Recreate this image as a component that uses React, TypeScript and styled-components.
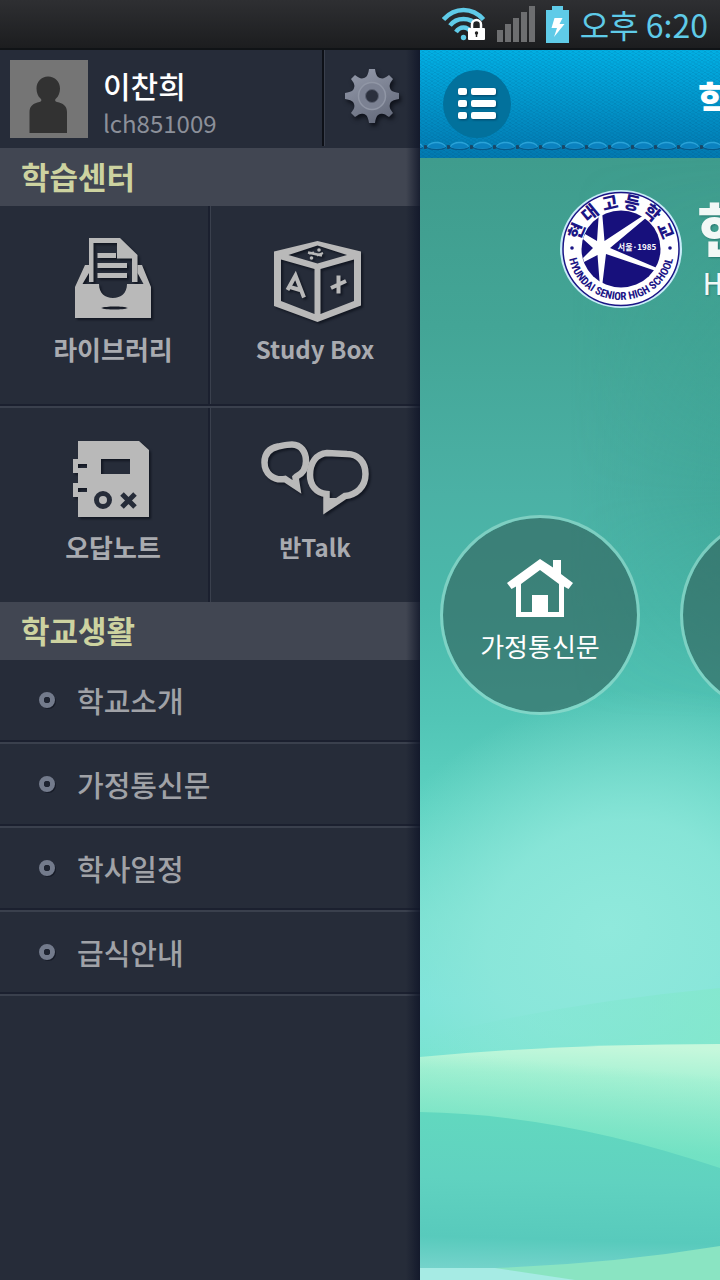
import React from 'react';
import styled, { createGlobalStyle } from 'styled-components';

const GlobalStyle = createGlobalStyle`
  * { box-sizing: border-box; }
  body {
    margin: 0;
    background: #262c39;
    font-family: "Noto Sans CJK KR", "Noto Sans", sans-serif;
  }
  button { border: 0; padding: 0; background: none; font: inherit; color: inherit; cursor: pointer; }
  a { color: inherit; text-decoration: none; }
  h1, h2, p, ul { margin: 0; padding: 0; font-weight: inherit; }
  svg { display: block; flex: none; }
`;

const Screen = styled.div`
  display: flex;
  flex-direction: column;
  min-height: 100vh;
  overflow: hidden;
`;

const StatusBar = styled.header`
  display: flex;
  align-items: center;
  justify-content: flex-end;
  gap: 11px;
  height: 50px;
  padding-right: 12px;
  border-bottom: 2px solid #101316;
  background: linear-gradient(#2e2f32, #1c1d1f);
`;

const Clock = styled.time`
  color: #5fcbe8;
  font-size: 32px;
  line-height: 48px;
  white-space: nowrap;
`;

const Body = styled.div`
  flex: 1;
  display: grid;
  grid-template-columns: minmax(0, 7fr) minmax(0, 5fr);
`;

const Drawer = styled.aside`
  position: relative;
  background: #262c39;
  &::after {
    content: "";
    position: absolute;
    inset: 0 0 0 auto;
    width: 14px;
    background: linear-gradient(90deg, rgba(15, 21, 40, 0), rgba(15, 21, 40, 0.8));
    pointer-events: none;
  }
`;

const Profile = styled.div`
  display: flex;
  height: 98px;
`;

const ProfileInfo = styled.div`
  flex: 1;
  display: flex;
  align-items: center;
  gap: 15px;
  padding-left: 10px;
`;

const UserText = styled.div`
  display: grid;
  gap: 2px;
  padding-top: 8px;
`;

const UserName = styled.p`
  color: #fff;
  font-size: 30px;
  font-weight: 500;
  line-height: 38px;
`;

const UserId = styled.p`
  color: #8c909a;
  font-size: 24px;
  line-height: 34px;
`;

const SettingsButton = styled.button`
  display: flex;
  align-items: center;
  justify-content: center;
  width: 98px;
  height: 96px;
  padding-bottom: 4px;
  border-left: 2px solid #0d1017;
  box-shadow: inset 1px 0 #3a404d;
  svg { filter: drop-shadow(2px 3px 2px rgba(8, 10, 18, 0.8)); }
`;

const SectionTitle = styled.h2`
  height: 58px;
  padding-left: 21px;
  background: #414652;
  color: #cdd3a0;
  font-size: 31px;
  font-weight: 700;
  line-height: 56px;
`;

const TileGrid = styled.div`
  display: grid;
  grid-template-columns: 1fr 1fr;
`;

const Tile = styled.a<{ $left?: boolean; $top?: boolean }>`
  display: flex;
  flex-direction: column;
  align-items: center;
  height: ${p => (p.$top ? 202 : 194)}px;
  padding-top: ${p => (p.$top ? 31 : 27)}px;
  padding-left: ${p => (p.$left ? 16 : 0)}px;
  border-bottom: ${p => (p.$top ? '2px solid #3a404d' : '0')};
  box-shadow: ${p =>
    [
      p.$top && 'inset 0 -2px #1b202f',
      p.$left ? 'inset -2px 0 #1b202f' : 'inset 1px 0 #3a404d',
    ].filter(Boolean).join(', ')};
`;

const TileIcon = styled.span`
  display: flex;
  align-items: center;
  height: 88px;
  svg { filter: drop-shadow(2px 2px 1px rgba(10, 14, 24, 0.7)); }
`;

const TileLabel = styled.span<{ $latin?: boolean }>`
  margin-top: 6px;
  color: #a9abb0;
  font-size: ${p => (p.$latin ? 24 : 26)}px;
  font-weight: 700;
  line-height: 36px;
`;

const Menu = styled.ul`
  list-style: none;
`;

const MenuLink = styled.a`
  display: flex;
  align-items: center;
  gap: 20px;
  height: 84px;
  padding: 0 0 2px 37px;
  border-bottom: 2px solid #3a404d;
  box-shadow: inset 0 -2px #1b202f;
  color: #a0a2a7;
  font-size: 29px;
  font-weight: 500;
  line-height: 40px;
`;

const Page = styled.main`
  position: relative;
  display: flex;
  flex-direction: column;
  overflow: hidden;
  background: #4fbcab;
`;

const Backdrop = styled.svg`
  position: absolute;
  inset: 108px 0 0 0;
  width: 100%;
  height: calc(100% - 108px);
`;

const TitleBar = styled.header`
  position: relative;
  display: flex;
  justify-content: space-between;
  height: 108px;
  padding: 20px 0 0 23px;
  background:
    repeating-linear-gradient(30deg, rgba(0, 50, 90, 0.08) 0 1px, transparent 1px 3px),
    repeating-linear-gradient(-30deg, rgba(0, 50, 90, 0.06) 0 1px, transparent 1px 3px),
    linear-gradient(#02b0e4, #0279b0);
`;

const Stitches = styled.svg`
  position: absolute;
  left: 0;
  bottom: 6px;
  width: 100%;
  height: 12px;
`;

const MenuButton = styled.button`
  display: flex;
  align-items: center;
  justify-content: center;
  width: 68px;
  height: 68px;
  border-radius: 50%;
  background: #02719c;
  svg { filter: drop-shadow(1px 1px 1px rgba(0, 40, 70, 0.6)); }
`;

const PageTitle = styled.h1`
  width: 22px;
  color: #fff;
  font-size: 38px;
  font-weight: 900;
  line-height: 56px;
  white-space: nowrap;
`;

const School = styled.div`
  position: relative;
  display: flex;
  justify-content: flex-end;
  gap: 14px;
  padding-top: 31px;
`;

const SchoolName = styled.div`
  width: 23px;
  color: #f2f8f6;
  white-space: nowrap;
  text-shadow: 1px 1px 2px rgba(0, 60, 60, 0.4);
`;

const SchoolKorean = styled.p`
  font-size: 58px;
  font-weight: 900;
  line-height: 76px;
`;

const SchoolEnglish = styled.p`
  padding-left: 6px;
  font-family: "Liberation Sans Narrow", "Roboto Condensed", "Liberation Sans", sans-serif;
  font-size: 32px;
  line-height: 38px;
`;

const Shortcuts = styled.nav`
  position: relative;
  display: flex;
  gap: 40px;
  padding: 206px 0 0 20px;
`;

const Shortcut = styled.a`
  flex: none;
  display: flex;
  flex-direction: column;
  align-items: center;
  width: 200px;
  height: 200px;
  padding-top: 41px;
  border: 3px solid rgba(160, 225, 212, 0.6);
  border-radius: 50%;
  background: rgba(48, 94, 88, 0.6);
  background-clip: padding-box;
  color: #fff;
  font-size: 26px;
  line-height: 36px;
  span { margin-top: 11px; }
`;

const WifiIcon = () => (
  <svg width="44" height="34" viewBox="0 0 44 34" fill="none" aria-hidden="true">
    <g stroke="#5fcbe8" strokeWidth="4.5">
      <path d="M1.5 12.5Q10 3 21.500 3T41.500 12.500" />
      <path d="M8 18.500Q13 12 21.500 12T35 18.500" />
      <path d="M14 25Q17 20.500 21.500 20.500T29 25" />
    </g>
    <circle cx="21.500" cy="30.500" r="2.700" fill="#5fcbe8" />
    <path d="M30 21v-3.500a4.500 4.500 0 0 1 9 0V21" fill="#222426" stroke="#fff" strokeWidth="2.500" />
    <rect x="26" y="21" width="17" height="12" rx="1" fill="#fff" />
    <circle cx="34.500" cy="26" r="1.700" fill="#222" />
    <path d="M34.500 26v4" stroke="#222" strokeWidth="1.500" />
  </svg>
);

const SignalIcon = () => (
  <svg width="38" height="36" viewBox="0 0 38 36" fill="#6d6e70" aria-hidden="true">
    <path d="M0 24h6v12H0zM8 18h6v18H8zM16 12h6v24h-6zM24 6h6v30h-6zM32 0h6v36h-6z" />
  </svg>
);

const BatteryIcon = () => (
  <svg width="23" height="37" viewBox="0 0 23 37" aria-hidden="true">
    <path d="M6 0h11v4h6v33H0V4h6z" fill="#5fcbe8" />
    <path d="M8.500 12h8l-3 6h5L8 31l3-9H5.500z" fill="#fff" />
  </svg>
);

const Avatar = () => (
  <svg width="78" height="78" viewBox="0 0 78 78" role="img" aria-label="프로필 사진">
    <path fill="#757575" d="M0 0h78v78H0z" />
    <path
      fill="#323232"
      d="M38 16.500c7 0 12 5 12 12 0 4-1.500 8-4 10-1.500 1.500-1 3 1 3.500 6 1 10 4 10 10v21H19.500V52c0-6 4-9 10-10 2-.5 2.500-2 1-3.500-2.500-2-4-6-4-10 0-7 5-12 11.500-12z"
    />
  </svg>
);

const GearIcon = () => (
  <svg width="60" height="60" viewBox="-30 -30 60 60" aria-hidden="true">
    <defs>
      <linearGradient id="gear" gradientUnits="userSpaceOnUse" x1="-15" y1="-27" x2="12" y2="27">
        <stop offset="0" stopColor="#9298a8" />
        <stop offset="1" stopColor="#646a7b" />
      </linearGradient>
    </defs>
    <path
      fill="url(#gear)"
      d="M-3-27H3C4-20 6-18.500 8-18 11-17 13-18 17-21L21-17C18-13 17-11 18-8 18.500-6 20-4 27-3V3C20 4 18.500 6 18 8 17 11 18 13 21 17L17 21C13 18 11 17 8 18 6 18.500 4 20 3 27H-3C-4 20-6 18.500-8 18-11 17-13 18-17 21L-21 17C-18 13-17 11-18 8-18.500 6-20 4-27 3V-3C-20-4-18.500-6-18-8-17-11-18-13-21-17L-17-21C-13-18-11-17-8-18-6-18.500-4-20-3-27z"
    />
    <circle r="13.500" fill="#7b8192" stroke="#9096a5" strokeWidth="1.500" />
    <circle r="6.500" fill="#2b303d" stroke="#5d6373" strokeWidth="1" />
  </svg>
);

const LibraryIcon = () => (
  <svg width="76" height="86" viewBox="0 0 76 86" fill="#b9b9b9" aria-hidden="true">
    <path fillRule="evenodd" d="M14 0h31l17.500 17v27H57V20.500H42V5H18.500v39H14z" />
    <path d="M22.500 15H41v5H22.500zM22.500 25H52v5H22.500zM22.500 35H52v5H22.500z" />
    <path
      fillRule="evenodd"
      d="M10 27h4v8L7.500 46H24c0 9 6 14 14 14s14-5 14-14h16.500L62.500 35v-8H67l9 22v31H0V49zM26 70c5 2 22 2 27 0-5-2-22-2-27 0z"
    />
  </svg>
);

const BoxIcon = () => (
  <svg width="92" height="80" viewBox="-5 0 92 80" overflow="visible" fill="none" stroke="#b9b9b9" aria-hidden="true">
    <path
      fill="#b9b9b9"
      stroke="none"
      fillRule="evenodd"
      d="M0 10.500 43.500 0 87 10.500v54L43.500 81 0 65zM14.500 14 43.500 22.500 73 14 43.500 4.500zM7 18.500V60l33.500 13V28zM46.500 28v45L80 60V18.500z"
    />
    <path strokeWidth="4" d="M13.500 49 21.500 34.500 30 56.500M16 46l10 3" />
    <path strokeWidth="4" d="M64.500 34.500v18M57 47l15-7" />
    <path strokeWidth="2.500" d="M34 11.500l14 3" />
    <path strokeWidth="2" d="M35 12.500l5-1M43 14.500l6-2.500" />
    <g fill="#b9b9b9" stroke="none">
      <circle cx="45" cy="9" r="1.800" />
      <circle cx="37.500" cy="17" r="1.800" />
    </g>
  </svg>
);

const NoteIcon = () => (
  <svg width="80" height="78" viewBox="0 0 80 78" aria-hidden="true">
    <path
      fill="#b9b9b9"
      fillRule="evenodd"
      d="M5 1h61l10 9v67H5V57H0V43h5V33H0V19h5zM5 24v4h9v-4zM5 48v4h9v-4zM28 19v15h29V19z"
    />
    <g fill="none" stroke="#262c39" strokeWidth="5">
      <circle cx="30" cy="60" r="6.500" />
      <path d="m49 54 13 13m0-13L49 67" />
    </g>
  </svg>
);

const TalkIcon = () => (
  <svg width="108" height="76" viewBox="0 0 108 76" fill="none" stroke="#b9b9b9" strokeWidth="6.500" aria-hidden="true">
    <path d="M17 5.500C22 4.500 26 3.500 31 3.500 40 3.500 45 11 45 20c0 8-4 13-9.500 15.500l-1 1L36 46 24 38C12 40 3.500 32 3.500 21.500 3.500 13 8 7.500 17 5.500z" />
    <path d="M66 12l20 1c11 0 18.500 8 18.500 20 0 13-9.500 21-20.500 22L65.500 67.500V53C55 52 49 44 49 34c0-12 6-21 17-22z" />
    <path d="M30 40l7 8 1-11zM66 70l14-13H66z" fill="#b9b9b9" stroke="none" />
  </svg>
);

const Bullet = () => (
  <svg width="20" height="20" viewBox="0 0 20 20" fill="none" aria-hidden="true">
    <circle cx="11.500" cy="11.500" r="7.500" fill="#171c28" />
    <circle cx="10" cy="10" r="5.500" stroke="#737b8c" strokeWidth="5" />
    <circle cx="10" cy="10" r="3" fill="#1e2431" />
  </svg>
);

const ListIcon = () => (
  <svg width="38" height="32" viewBox="0 0 38 32" fill="#fff" aria-hidden="true">
    {[0, 12, 24].map(y => (
      <g key={y}>
        <rect y={y} width="9" height="7" rx="2" />
        <rect x="13" y={y} width="25" height="7" rx="2" />
      </g>
    ))}
  </svg>
);

const HouseIcon = () => (
  <svg width="66" height="58" viewBox="0 0 66 58" aria-hidden="true">
    <path
      fill="#fff"
      fillRule="evenodd"
      d="M33 0 46 8.500V1h8v14l12 9-4.500 6-4.500-2.500V58H9V27.500L4.500 30 0 24zM33 11 14 25v28h11V36h16v17h11V25z"
    />
  </svg>
);

const SchoolCrest = () => (
  <svg width="124" height="120" viewBox="-62 -60 124 120" role="img" aria-label="현대고등학교">
    <defs>
      <path id="crest-top" d="M-42 0A42 41 0 0 1 42 0" />
      <path id="crest-bottom" d="M-53 0A53 51 0 0 0 53 0" />
    </defs>
    <ellipse rx="61" ry="59" fill="#c8ecf8" />
    <ellipse rx="58" ry="56.500" fill="#fff" stroke="#1b1585" strokeWidth="1.500" />
    <ellipse rx="39.500" ry="38.500" fill="#17107c" />
    <path
      fill="#fff"
      d="M-22-38-19-38-16.500-8 23-34 26-32-11-1 36 19 35 22-15 5-19 38-21 38-23.500 6-37 13-38 9-28-1-38-10-36-15-24-8z"
    />
    <text fill="#1b1585" fontSize="17" fontWeight="900" textAnchor="middle">
      <textPath href="#crest-top" startOffset="50%">현 대 고 등 학 교</textPath>
    </text>
    <text fill="#1b1585" fontSize="11" fontWeight="700" fontFamily="Liberation Sans Narrow, Roboto Condensed, Liberation Sans, sans-serif" textAnchor="middle">
      <textPath href="#crest-bottom" startOffset="50%">HYUNDAI SENIOR HIGH SCHOOL</textPath>
    </text>
    <text x="16" y="1" fill="#fff" fontSize="8" fontWeight="700" textAnchor="middle">서울·1985</text>
    <circle cx="-49" cy="-1" r="1.800" fill="#1b1585" />
    <circle cx="49" cy="-1" r="1.800" fill="#1b1585" />
  </svg>
);

const WaveBackdrop = () => (
  <Backdrop viewBox="0 0 300 1122" preserveAspectRatio="none" aria-hidden="true">
    <defs>
      <linearGradient id="sky" x1="0" y1="0" x2="0" y2="1">
        <stop offset="0" stopColor="#3f9c8d" />
        <stop offset="0.150" stopColor="#43a596" />
        <stop offset="0.300" stopColor="#4bb1a5" />
        <stop offset="0.400" stopColor="#4bb9ab" />
        <stop offset="0.500" stopColor="#52c5b6" />
        <stop offset="0.580" stopColor="#5dd2c1" />
        <stop offset="0.680" stopColor="#74dfd0" />
        <stop offset="0.750" stopColor="#78e3dc" />
        <stop offset="0.800" stopColor="#72e3cf" />
      </linearGradient>
      <radialGradient id="glow" gradientUnits="userSpaceOnUse" cx="0" cy="0" r="1" gradientTransform="translate(190 770) rotate(-25) scale(280 230)">
        <stop offset="0" stopColor="#90e9dc" />
        <stop offset="0.450" stopColor="#8de7da" stopOpacity="0.850" />
        <stop offset="1" stopColor="#8de4d6" stopOpacity="0" />
      </radialGradient>
      <linearGradient id="shade" x1="0" y1="0" x2="1" y2="0">
        <stop offset="0.500" stopColor="#2f9684" stopOpacity="0" />
        <stop offset="1" stopColor="#2f9684" stopOpacity="0.300" />
      </linearGradient>
      <linearGradient id="shade-fade" x1="0" y1="0" x2="0" y2="1">
        <stop offset="0" stopColor="#fff" stopOpacity="0" />
        <stop offset="0.600" stopColor="#fff" />
        <stop offset="1" stopColor="#fff" stopOpacity="0" />
      </linearGradient>
      <mask id="shade-mask">
        <path fill="url(#shade-fade)" d="M0 0h300v560H0z" />
      </mask>
      <linearGradient id="hill" x1="0.600" y1="0" x2="0.500" y2="1">
        <stop offset="0" stopColor="#c6f8dc" />
        <stop offset="0.250" stopColor="#a8f2d4" />
        <stop offset="0.700" stopColor="#97ebd0" />
        <stop offset="1" stopColor="#84e2d2" />
      </linearGradient>
      <linearGradient id="hill-edge" x1="0.100" y1="1" x2="0.300" y2="0">
        <stop offset="0.300" stopColor="#66dfbe" stopOpacity="0.700" />
        <stop offset="0.900" stopColor="#66dfbe" stopOpacity="0" />
      </linearGradient>
      <linearGradient id="sea" x1="0.300" y1="0" x2="0.250" y2="1">
        <stop offset="0" stopColor="#62d8bf" />
        <stop offset="0.400" stopColor="#60d2c0" />
        <stop offset="0.750" stopColor="#58cabc" />
        <stop offset="1" stopColor="#7ed6d0" />
      </linearGradient>
      <linearGradient id="far" x1="1" y1="0" x2="0" y2="0">
        <stop offset="0" stopColor="#84e8cc" stopOpacity="0.800" />
        <stop offset="1" stopColor="#7ae4d0" stopOpacity="0" />
      </linearGradient>
    </defs>
    <path fill="url(#sky)" d="M0 0h300v1122H0z" />
    <path fill="url(#shade)" mask="url(#shade-mask)" d="M0 0h300v560H0z" />
    <path fill="url(#glow)" d="M0 500h300v500H0z" />
    <path fill="url(#far)" d="M0 880Q140 845 300 830v80H0z" />
    <path fill="url(#hill)" d="M0 899Q140 886 300 886v130L0 970z" />
    <path fill="url(#hill-edge)" d="M0 899Q140 886 300 886v130L0 970z" />
    <path fill="url(#sea)" d="M0 954Q140 956 300 1010v112H0z" />
    <path fill="#8ae4c2" d="M75 1110Q190 1106 300 1088v34H75z" />
    <path fill="#a6ebe4" d="M0 1110h75l80 12H0z" />
  </Backdrop>
);

const StitchLine = () => (
  <Stitches aria-hidden="true">
    <defs>
      <pattern id="stitch" x="4" width="23" height="12" patternUnits="userSpaceOnUse">
        <ellipse cx="1.500" cy="7" rx="2.500" ry="2" fill="#1a4766" />
        <path d="M3 8C4 1 20 1 22 8c-3 3-16 3-19 0z" fill="#045a8c" />
        <path d="M3 6.500C5 0 20 0 22 6.500c-3 3-16 3-19 0z" fill="#2aa3d8" />
        <path d="M4 7C6 2 19 2 21 7c-3 2-14 2-17 0z" fill="#0b82c0" />
      </pattern>
    </defs>
    <rect width="100%" height="12" fill="url(#stitch)" />
  </Stitches>
);

const tiles = [
  { label: '라이브러리', Icon: LibraryIcon },
  { label: 'Study Box', Icon: BoxIcon, latin: true },
  { label: '오답노트', Icon: NoteIcon },
  { label: '반Talk', Icon: TalkIcon, latin: true },
];

const menuItems = ['학교소개', '가정통신문', '학사일정', '급식안내'];

export default function App() {
  return (
    <Screen>
      <GlobalStyle />
      <StatusBar>
        <WifiIcon />
        <SignalIcon />
        <BatteryIcon />
        <Clock>오후 6:20</Clock>
      </StatusBar>
      <Body>
        <Drawer>
          <Profile>
            <ProfileInfo>
              <Avatar />
              <UserText>
                <UserName>이찬희</UserName>
                <UserId>lch851009</UserId>
              </UserText>
            </ProfileInfo>
            <SettingsButton aria-label="설정">
              <GearIcon />
            </SettingsButton>
          </Profile>
          <SectionTitle>학습센터</SectionTitle>
          <TileGrid>
            {tiles.map(({ label, Icon, latin }, i) => (
              <Tile key={label} href="#" $left={i % 2 === 0} $top={i < 2}>
                <TileIcon>
                  <Icon />
                </TileIcon>
                <TileLabel $latin={latin}>{label}</TileLabel>
              </Tile>
            ))}
          </TileGrid>
          <SectionTitle>학교생활</SectionTitle>
          <Menu>
            {menuItems.map(item => (
              <li key={item}>
                <MenuLink href="#">
                  <Bullet />
                  {item}
                </MenuLink>
              </li>
            ))}
          </Menu>
        </Drawer>
        <Page>
          <WaveBackdrop />
          <TitleBar>
            <MenuButton aria-label="메뉴">
              <ListIcon />
            </MenuButton>
            <PageTitle>학</PageTitle>
            <StitchLine />
          </TitleBar>
          <School>
            <SchoolCrest />
            <SchoolName>
              <SchoolKorean>현</SchoolKorean>
              <SchoolEnglish>HY</SchoolEnglish>
            </SchoolName>
          </School>
          <Shortcuts>
            <Shortcut href="#">
              <HouseIcon />
              <span>가정통신문</span>
            </Shortcut>
            <Shortcut href="#" aria-label="다음 메뉴" />
          </Shortcuts>
        </Page>
      </Body>
    </Screen>
  );
}
